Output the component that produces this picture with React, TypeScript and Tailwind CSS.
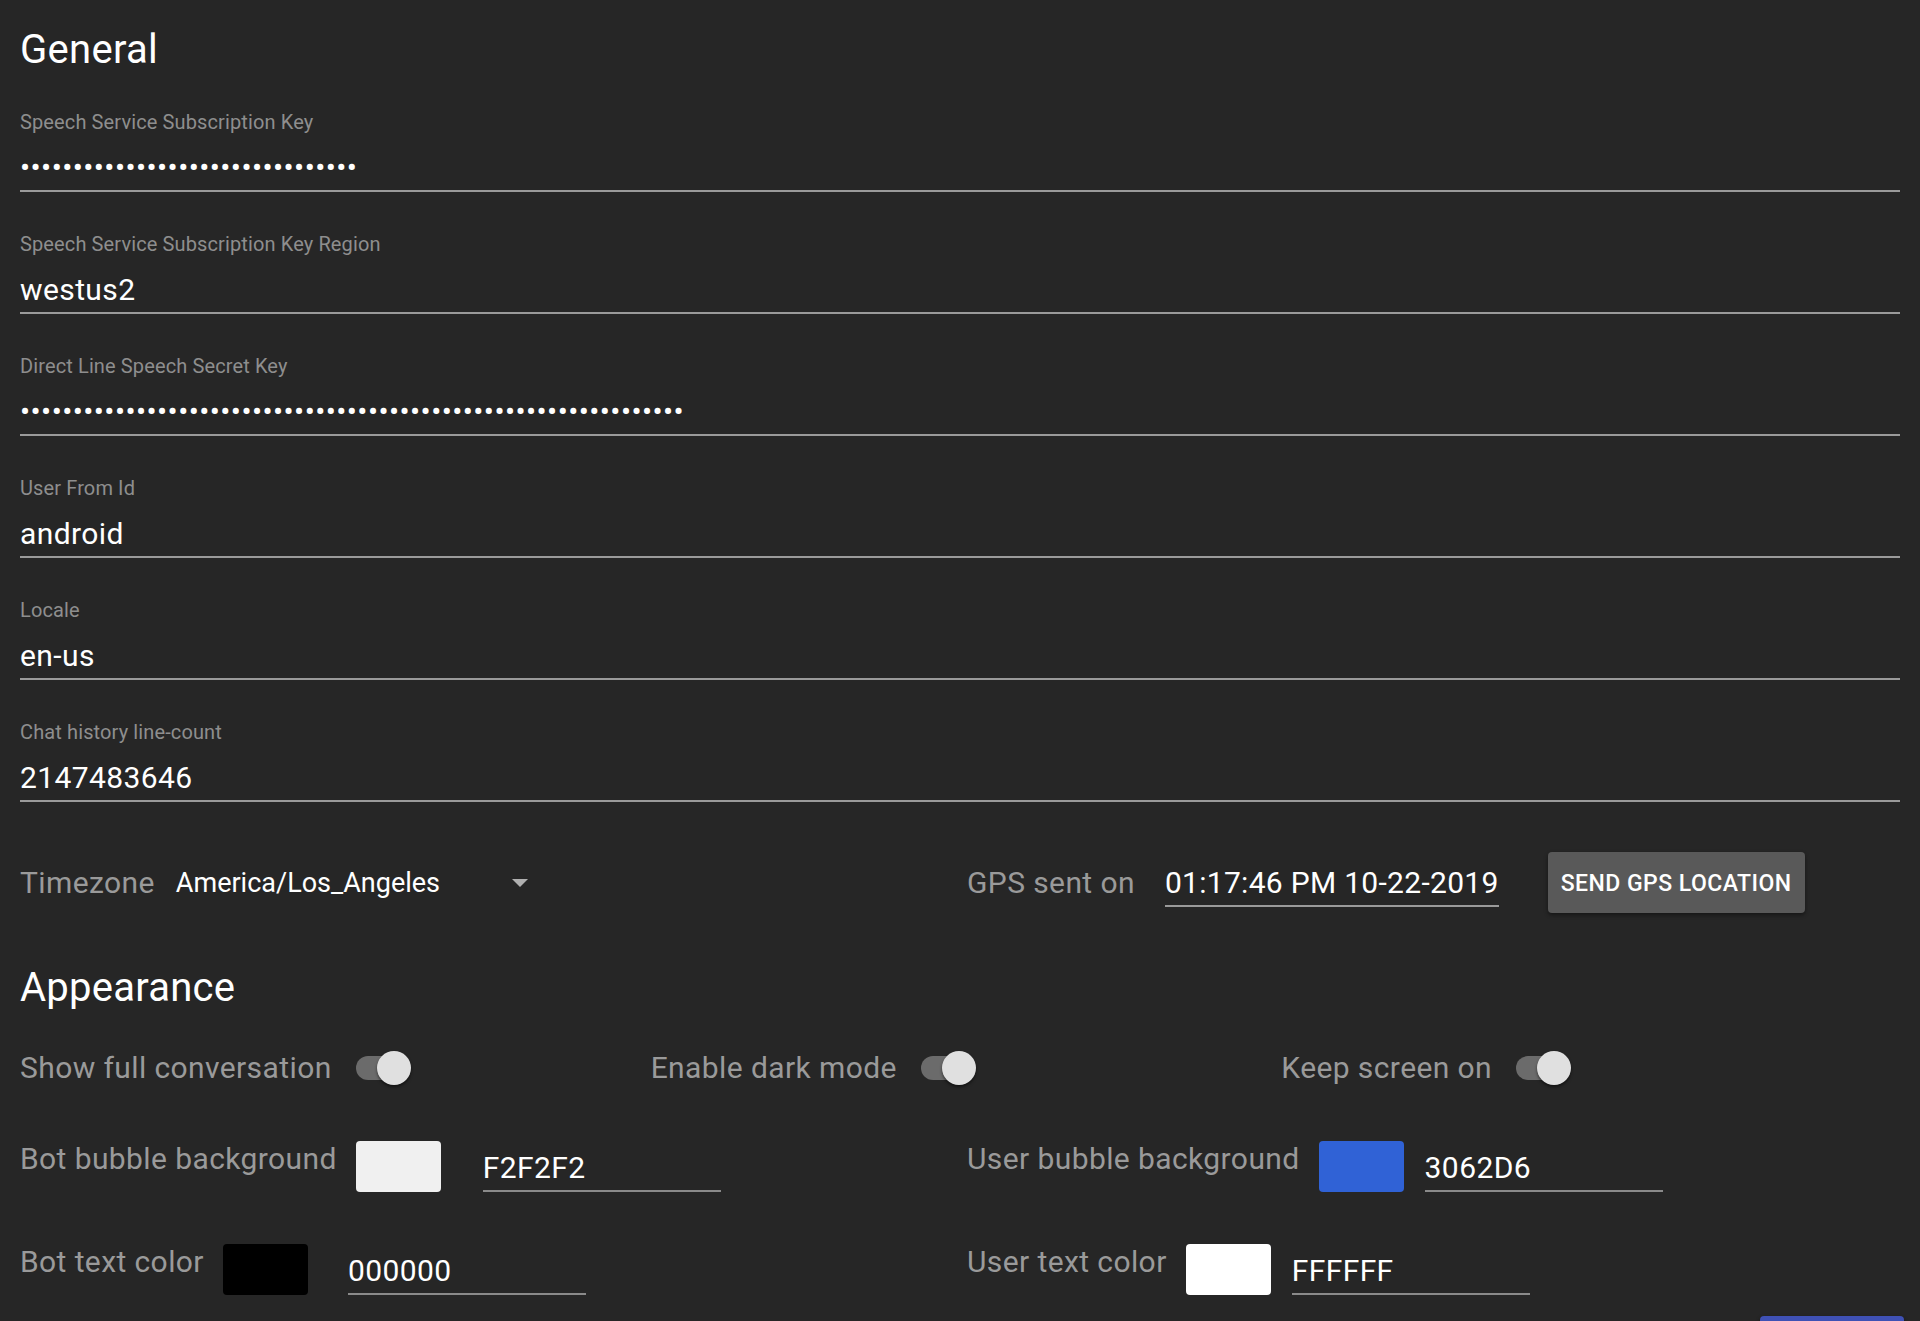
import React from "react";

type Field = { label: string; value: string; secret?: boolean };

const fields: Field[] = [
  { label: "Speech Service Subscription Key", value: "•".repeat(32), secret: true },
  { label: "Speech Service Subscription Key Region", value: "westus2" },
  { label: "Direct Line Speech Secret Key", value: "•".repeat(63), secret: true },
  { label: "User From Id", value: "android" },
  { label: "Locale", value: "en-us" },
  { label: "Chat history line-count", value: "2147483646" },
];

function TextField({ label, value, secret }: Field) {
  return (
    <div className="border-b-2 border-[#9a9a9a] pb-[4px]">
      <div className="text-[20px] leading-[24px] tracking-[0.12px] text-[#8e8e8e]">{label}</div>
      <div
        className={
          secret
            ? "mt-[16px] h-[36px] text-[30px] leading-[35px] tracking-[0.42px] text-white"
            : "mt-[16px] text-[30px] leading-[36px] tracking-[0.4px] text-white"
        }
      >
        {value}
      </div>
    </div>
  );
}

function Toggle() {
  return (
    <div className="relative h-[34px] w-[55px] shrink-0">
      <div className="absolute left-0 top-[5px] h-[24px] w-[48px] rounded-full bg-[#6b6b6b]" />
      <div className="absolute right-0 top-0 h-[34px] w-[34px] rounded-full bg-[#e0e0e0] shadow-[0_2px_3px_rgba(0,0,0,0.5)]" />
    </div>
  );
}

function ColorRow({
  label,
  swatch,
  value,
  inputGap,
}: {
  label: string;
  swatch: string;
  value: string;
  inputGap: string;
}) {
  return (
    <div className="flex items-start gap-[19px]">
      <span className="text-[30px] leading-[36px] tracking-[0.4px] text-[#9a9a9a]">{label}</span>
      <div className={`flex items-end ${inputGap}`}>
        <div className={`h-[51px] w-[85px] rounded-[4px] ${swatch}`} />
        <div className="w-[238px] border-b-2 border-[#8a8a8a] pb-[4px] text-[30px] leading-[36px] tracking-[0.4px] text-white">
          {value}
        </div>
      </div>
    </div>
  );
}

export default function App() {
  return (
    <div className="h-[1321px] overflow-hidden bg-[#262626] px-[20px] pt-[26px] font-[Roboto,sans-serif]">
      <h1 className="text-[40px] leading-[48px] font-normal tracking-[0.3px] text-white">General</h1>

      <div className="mt-[36px] flex flex-col gap-[40px]">
        {fields.map((f) => (
          <TextField key={f.label} {...f} />
        ))}
      </div>

      {/* timezone + gps */}
      <div className="mt-[50px] flex h-[61px] items-center">
        <div className="flex w-[947px] items-center gap-[21px]">
          <span className="text-[30px] leading-[36px] tracking-[0.4px] text-[#9a9a9a]">Timezone</span>
          <div className="flex w-[360px] items-center justify-between pr-[8px]">
            <span className="text-[27px] leading-[36px] text-white">America/Los_Angeles</span>
            <svg width="16" height="8" viewBox="0 0 16 8">
              <path d="M0 0h16L8 8z" fill="#b0b0b0" />
            </svg>
          </div>
        </div>
        <span className="text-[30px] leading-[36px] tracking-[0.4px] text-[#9a9a9a]">GPS sent on</span>
        <span className="ml-[30px] mt-[6px] border-b-2 border-[#9a9a9a] pb-[4px] text-[30px] leading-[36px] tracking-[0.3px] text-white">
          01:17:46 PM 10-22-2019
        </span>
        <button className="ml-[49px] h-[61px] rounded-[4px] bg-[#595959] px-[13px] pt-[4px] text-[23px] font-medium uppercase tracking-[0.02em] text-white shadow-[0_2px_4px_rgba(0,0,0,0.45)]">
          Send GPS Location
        </button>
      </div>

      <h2 className="mt-[51px] text-[40px] leading-[48px] font-normal tracking-[0.25px] text-white">Appearance</h2>

      <div className="mt-[38px] grid grid-cols-3 gap-x-[12px]">
        {["Show full conversation", "Enable dark mode", "Keep screen on"].map((t) => (
          <div key={t} className="flex items-center gap-[24px]">
            <span className="text-[30px] leading-[36px] tracking-[0.4px] text-[#9a9a9a]">{t}</span>
            <Toggle />
          </div>
        ))}
      </div>

      <div className="mt-[55px] grid grid-cols-[947px_1fr] gap-y-[52px]">
        <ColorRow label="Bot bubble background" swatch="bg-[#f0f0f0]" value="F2F2F2" inputGap="gap-[42px]" />
        <ColorRow label="User bubble background" swatch="bg-[#3062d6]" value="3062D6" inputGap="gap-[21px]" />
        <ColorRow label="Bot text color" swatch="bg-black" value="000000" inputGap="gap-[40px]" />
        <ColorRow label="User text color" swatch="bg-white" value="FFFFFF" inputGap="gap-[21px]" />
      </div>

      {/* dialog actions, mostly below the fold */}
      <div className="-mr-[4px] mt-[21px] flex justify-end">
        <div className="h-[61px] w-[144px] rounded-[4px] bg-[#3f51b5] shadow-[0_2px_4px_rgba(0,0,0,0.45)]" />
      </div>
    </div>
  );
}
